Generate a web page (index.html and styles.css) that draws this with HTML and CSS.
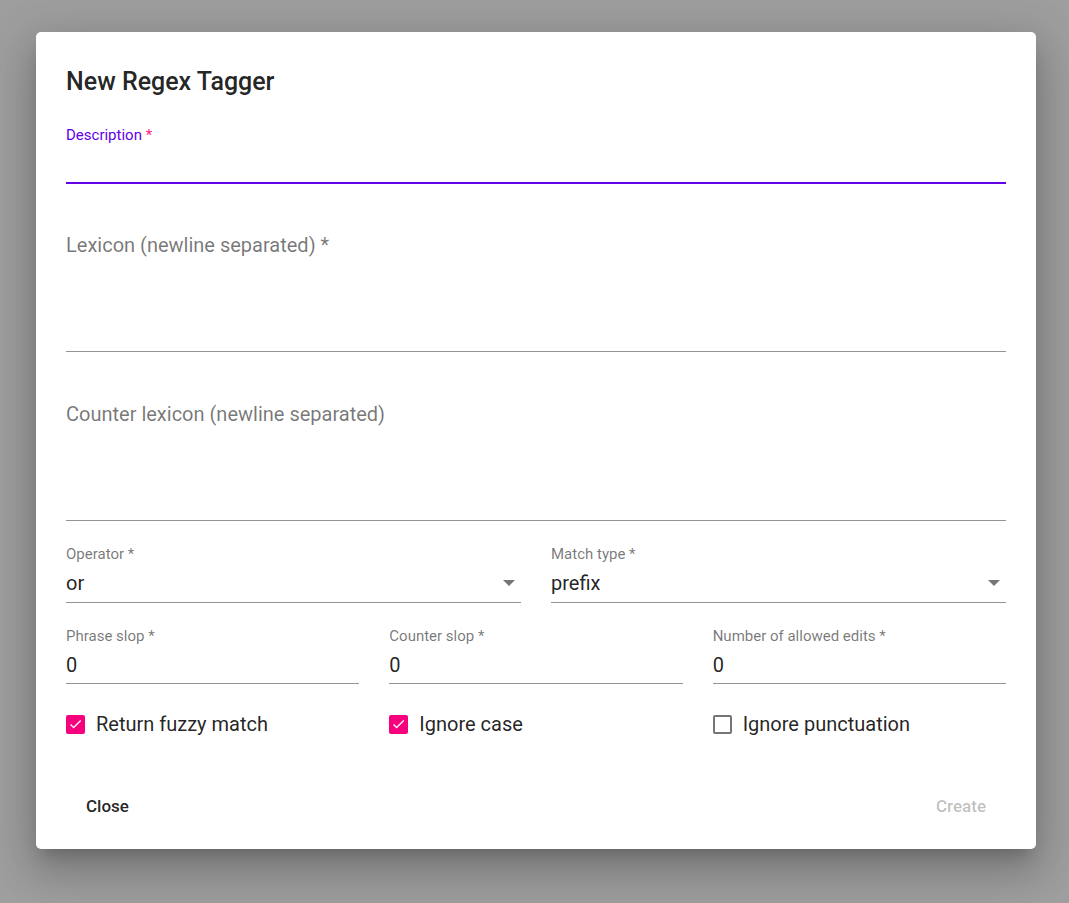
FILE: index.html
```html
<!DOCTYPE html>
<html lang="en">
<head>
<meta charset="utf-8">
<title>New Regex Tagger</title>
<link rel="stylesheet" href="styles.css">
</head>
<body>
<div class="dialog">
  <h2 class="title">New Regex Tagger</h2>

  <div class="field focused">
    <div class="flabel">Description <span class="req">*</span></div>
    <div class="finput"></div>
  </div>

  <div class="field area">
    <div class="placeholder">Lexicon (newline separated) *</div>
  </div>

  <div class="field area second">
    <div class="placeholder">Counter lexicon (newline separated)</div>
  </div>

  <div class="row two">
    <div class="field line">
      <div class="flabel">Operator *</div>
      <div class="fvalue"><span>or</span><span class="arrow"></span></div>
    </div>
    <div class="field line">
      <div class="flabel">Match type *</div>
      <div class="fvalue"><span>prefix</span><span class="arrow"></span></div>
    </div>
  </div>

  <div class="row three">
    <div class="field line">
      <div class="flabel">Phrase slop *</div>
      <div class="fvalue"><span>0</span></div>
    </div>
    <div class="field line">
      <div class="flabel">Counter slop *</div>
      <div class="fvalue"><span>0</span></div>
    </div>
    <div class="field line">
      <div class="flabel">Number of allowed edits *</div>
      <div class="fvalue"><span>0</span></div>
    </div>
  </div>

  <div class="row three checks">
    <label class="check">
      <span class="box checked"><svg viewBox="0 0 24 24" width="18" height="18"><path d="M4.1 12.7 9 17.6 20.3 6.3" fill="none" stroke="#fff" stroke-width="2"/></svg></span>
      <span class="clabel">Return fuzzy match</span>
    </label>
    <label class="check">
      <span class="box checked"><svg viewBox="0 0 24 24" width="18" height="18"><path d="M4.1 12.7 9 17.6 20.3 6.3" fill="none" stroke="#fff" stroke-width="2"/></svg></span>
      <span class="clabel">Ignore case</span>
    </label>
    <label class="check">
      <span class="box"></span>
      <span class="clabel">Ignore punctuation</span>
    </label>
  </div>

  <div class="actions">
    <button class="btn">Close</button>
    <button class="btn disabled">Create</button>
  </div>
</div>
</body>
</html>
```

FILE: styles.css
```css
* { box-sizing: border-box; }
html, body { margin: 0; padding: 0; }
body {
  background: #9e9e9e;
  width: 1069px;
  height: 903px;
  overflow: hidden;
  padding: 32px 0 0 36px;
  font-family: Roboto, "Liberation Sans", sans-serif;
  color: rgba(0,0,0,.87);
}
.dialog {
  width: 1000px;
  background: #fff;
  border-radius: 5px;
  padding: 34px 30px 21px 30px;
  box-shadow: 0 11px 15px -7px rgba(0,0,0,.2), 0 24px 38px 3px rgba(0,0,0,.14), 0 9px 46px 8px rgba(0,0,0,.12);
}
.title {
  margin: 0 0 28px 0;
  font-size: 25px;
  font-weight: 500;
  line-height: 32px;
  color: rgba(0,0,0,.87);
}
.field { display: flex; flex-direction: column; }
.flabel {
  font-size: 15px;
  line-height: 18px;
  color: rgba(0,0,0,.54);
  white-space: nowrap;
}
.focused .flabel { color: #6200ea; }
.req { color: #ff1a86; }
.finput {
  height: 40px;
  border-bottom: 2px solid #6200ea;
}
.area {
  margin-top: 49px;
  height: 119px;
  border-bottom: 1px solid #949494;
}
.area.second { margin-top: 50px; }
.placeholder {
  font-size: 20px;
  line-height: 24px;
  color: rgba(0,0,0,.54);
}
.row { display: grid; column-gap: 30px; }
.two { grid-template-columns: 1fr 1fr; margin-top: 24px; }
.three { grid-template-columns: 1fr 1fr 1fr; margin-top: 24px; }
.line { border-bottom: 1px solid #949494; padding-bottom: 7px; }
.three .line { padding-bottom: 6px; }
.fvalue {
  margin-top: 8px;
  font-size: 20px;
  line-height: 24px;
  display: flex;
  align-items: center;
  justify-content: space-between;
  color: rgba(0,0,0,.87);
}
.arrow {
  width: 0; height: 0;
  border-left: 6px solid transparent;
  border-right: 6px solid transparent;
  border-top: 6px solid rgba(0,0,0,.54);
  margin-right: 6px;
}
.checks { margin-top: 28px; }
.check {
  display: flex;
  align-items: center;
  height: 24px;
  gap: 11px;
}
.box {
  width: 19px; height: 19px;
  border: 2px solid rgba(0,0,0,.54);
  border-radius: 2px;
  display: flex;
  align-items: center;
  justify-content: center;
  flex: none;
}
.box.checked { background: #f7007e; border-color: #f7007e; }
.box svg { display: block; }
.clabel { font-size: 20px; line-height: 24px; }
.actions {
  margin-top: 47px;
  display: flex;
  justify-content: space-between;
}
.btn {
  height: 45px;
  padding: 0 20px;
  border: 0;
  background: transparent;
  font-family: Roboto, "Liberation Sans", sans-serif;
  font-size: 17px;
  font-weight: 500;
  color: rgba(0,0,0,.87);
  border-radius: 5px;
}
.btn.disabled { color: rgba(0,0,0,.26); }
```
